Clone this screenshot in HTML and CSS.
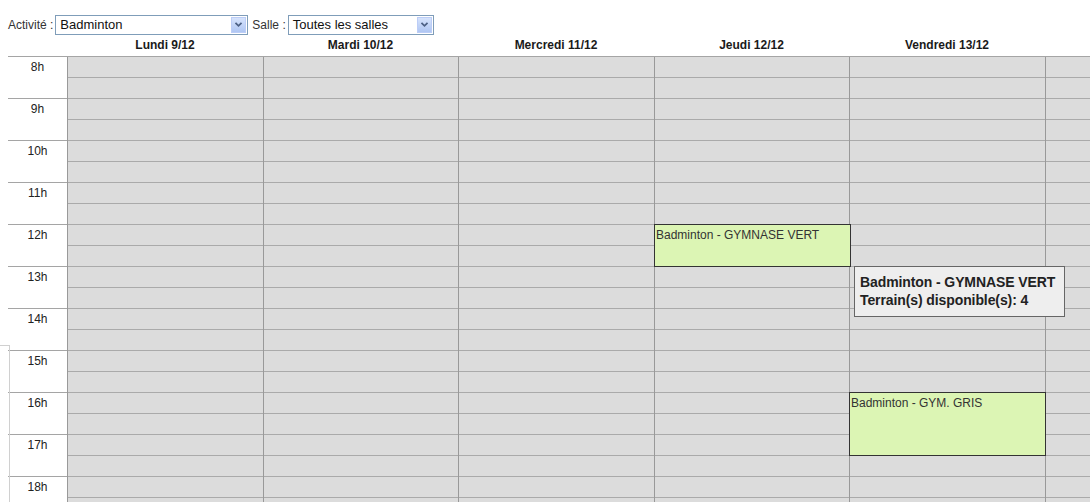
FILE: index.html
```html
<!DOCTYPE html>
<html lang="fr">
<head>
    <meta charset="UTF-8">
    <title>Planning Badminton</title>
    <link rel="stylesheet" href="styles.css">
</head>
<body>
    <div class="toolbar">
        <label class="field-label">Activité :</label>
        <div class="fake-select select-activity">
            <span>Badminton</span>
            <span class="select-btn"><svg width="15" height="17" viewBox="0 0 15 17"><path d="M4 6.5 L7.5 10 L11 6.5" fill="none" stroke="#4d6185" stroke-width="2"/></svg></span>
        </div>
        <label class="field-label">Salle :</label>
        <div class="fake-select select-salle">
            <span>Toutes les salles</span>
            <span class="select-btn"><svg width="15" height="17" viewBox="0 0 15 17"><path d="M4 6.5 L7.5 10 L11 6.5" fill="none" stroke="#4d6185" stroke-width="2"/></svg></span>
        </div>
    </div>

    <div class="planning">
        <div class="head-row">
            <div class="head-cell"></div>
            <div class="head-cell">Lundi 9/12</div>
            <div class="head-cell">Mardi 10/12</div>
            <div class="head-cell">Mercredi 11/12</div>
            <div class="head-cell">Jeudi 12/12</div>
            <div class="head-cell">Vendredi 13/12</div>
            <div class="head-cell"></div>
        </div>
        <div class="body-row">
            <div class="hours">
                <div class="hour">8h</div>
                <div class="hour">9h</div>
                <div class="hour">10h</div>
                <div class="hour">11h</div>
                <div class="hour">12h</div>
                <div class="hour">13h</div>
                <div class="hour">14h</div>
                <div class="hour">15h</div>
                <div class="hour">16h</div>
                <div class="hour">17h</div>
                <div class="hour">18h</div>
            </div>
            <div class="day"></div>
            <div class="day"></div>
            <div class="day"></div>
            <div class="day">
                <div class="event" style="top: 167px; height: 41px;">Badminton - GYMNASE VERT</div>
            </div>
            <div class="day">
                <div class="event" style="top: 335px; height: 62px;">Badminton - GYM. GRIS</div>
            </div>
            <div class="day"></div>
        </div>
    </div>

    <div class="tooltip">
        Badminton - GYMNASE VERT<br>
        Terrain(s) disponible(s): 4
    </div>

    <div class="side-frame"></div>
</body>
</html>
```

FILE: styles.css
```css
body {
    margin: 0;
    padding: 0;
    background: #ffffff;
    font-family: 'Liberation Sans', Arial, sans-serif;
    color: #222;
    width: 1090px;
    height: 502px;
    overflow: hidden;
    position: relative;
}

.toolbar {
    display: flex;
    align-items: center;
    padding: 14px 0 0 8px;
    height: 21px;
}

.field-label {
    font-size: 12px;
    color: #333;
    margin-right: 2px;
}

.fake-select {
    display: flex;
    align-items: center;
    justify-content: space-between;
    box-sizing: border-box;
    height: 20px;
    border: 1px solid #7f9db9;
    background: #fff;
    font-size: 13px;
    color: #111;
    padding-left: 4px;
    margin-right: 4px;
}

.select-activity {
    width: 193px;
}

.select-salle {
    width: 146px;
}

.select-btn {
    width: 15px;
    height: 16px;
    margin-right: 1px;
    background: linear-gradient(#d6e3fc, #afc6f3);
    border: 1px solid #bccdf7;
    box-sizing: border-box;
    display: flex;
    align-items: center;
    justify-content: center;
}

.select-btn svg {
    display: block;
}

.planning {
    margin-left: 8px;
    width: 1082px;
    height: 467px;
    overflow: hidden;
}

.head-row,
.body-row {
    display: grid;
    grid-template-columns: 59px 196px 195px 196px 195px 196px 195px;
}

.head-row {
    height: 21px;
    border-bottom: 1px solid #a5a5a5;
}

.head-cell {
    font-size: 12px;
    font-weight: bold;
    text-align: center;
    line-height: 20px;
    color: #1a1a1a;
}

.body-row {
    height: 460px;
}

.hours {
    background: #fff;
}

.hour {
    height: 38px;
    padding-top: 3px;
    border-bottom: 1px solid #a5a5a5;
    text-align: center;
    font-size: 12px;
    color: #222;
}

.day {
    position: relative;
    border-left: 1px solid #999;
    background: repeating-linear-gradient(to bottom, #dcdcdc 0 20px, #aaaaaa 20px 21px);
}

.event {
    position: absolute;
    left: -1px;
    width: 194px;
    padding-left: 1px;
    border: 1px solid #333;
    background: #dcf5b4;
    font-size: 12px;
    line-height: 20px;
    color: #333;
    z-index: 1;
}

.tooltip {
    position: absolute;
    left: 854px;
    top: 266px;
    width: 204px;
    height: 37px;
    padding: 6px 0 6px 5px;
    border: 1px solid #666;
    background: #eeeeee;
    font-size: 14px;
    font-weight: bold;
    line-height: 18px;
    color: #222;
    white-space: nowrap;
    letter-spacing: -0.1px;
    z-index: 2;
}

.side-frame {
    position: absolute;
    left: 0;
    top: 345px;
    width: 9px;
    height: 156px;
    border-top: 1px solid #d0d0d0;
    border-right: 1px solid #d0d0d0;
}
```
